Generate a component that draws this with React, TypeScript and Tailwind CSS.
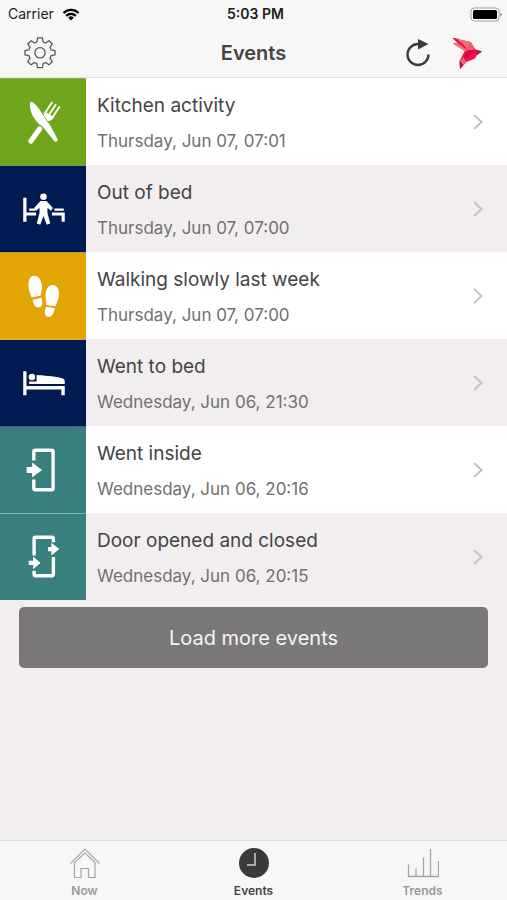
import { ReactNode, useState } from "react";

type EventItem = {
  title: string;
  time: string;
  tile: string;
  icon: ReactNode;
};

const KitchenIcon = () => (
  <svg viewBox="0 0 86 87" className="h-full w-full" fill="#fff" aria-hidden="true">
    <path d="M31 23c3 .5 6.500 4.500 10.500 11l5 8c1 1.500 2 2.300 3.300 4l8 15c.8 1.800-1.800 3.500-3.300 2L43 48.500c-1-1.200-2-1.600-3.500-2.500C33 40 29.300 32 29.700 24.500c0-.8.5-1.500 1.300-1.500z" />
    <path
      d="M39.500 50.500l-8.700 12.300"
      fill="none"
      stroke="#fff"
      strokeWidth="5.200"
      strokeLinecap="round"
    />
    <path
      d="M52 23.800l-6.500 10M55.800 26l-6.500 10M59.500 28.300l-6.500 10"
      fill="none"
      stroke="#fff"
      strokeWidth="1.900"
      strokeLinecap="round"
    />
    <path d="M44.600 32.500l9.500 6.200c-1.600 3-4.300 4.300-6.600 3.600L43.800 36.500c-.3-1.500 0-2.800.8-4z" />
  </svg>
);

const OutOfBedIcon = () => (
  <svg viewBox="0 0 86 87" className="h-full w-full" fill="#fff" aria-hidden="true">
    <path d="M23 32h3.300v15H36v3.200h-9.700V56.500H23zM29 43h6.500v2.300H29zM54.500 43H64v2.300h-9.500zM52 47h13v9.500h-3.200v-6.300H52z" />
    <circle cx="43.500" cy="31" r="3.300" />
    <path d="M40.500 35.300h6L53 42.500l-2 2.700-3.500-3v5l2.800 11-3.500 1.300-3.300-9-3.300 9-3.500-1.300 2.800-11v-5l-3.500 3-2-2.700z" />
  </svg>
);

const FootstepsIcon = () => (
  <svg viewBox="0 0 86 87" className="h-full w-full" fill="#fff" aria-hidden="true">
    <path d="M33.500 23c4.500-.5 7.500 3.500 8.300 9.500.6 4-.8 7-1 10.500l-9.500 2c-.8-3.500-2.800-6-3-11-.3-6 1.200-10.500 5.200-11z" />
    <path d="M32.500 47.300l8.800-2c1.500 4.500 1.500 9-2.300 9.700-4 .7-5.500-3-6.500-7.700z" />
    <path d="M54 32.500c4 .7 5.800 5 5 11-.6 4.300-2.500 7-3.200 10.300l-9.500-1.300c.3-3.500-1-6.500-.7-10.500.5-6 3.500-10.300 8.400-9.500z" />
    <path d="M46 54.500l9 1.300c-1 5-3 9.500-7 8.900-4-.7-3.500-6-2-10.200z" />
  </svg>
);

const BedIcon = () => (
  <svg viewBox="0 0 86 87" className="h-full w-full" fill="#fff" aria-hidden="true">
    <path d="M23 31.500h3.300V46.500H65V56h-3.500v-5.800H26.300V56H23z" />
    <circle cx="31.800" cy="37.500" r="3.300" />
    <path d="M36.500 35.500c6 .3 17 1.300 25 3 2.300.5 3.300 1.500 3.500 3v3H29V42h7.500z" />
  </svg>
);

const WentInsideIcon = () => (
  <svg viewBox="0 0 86 87" className="h-full w-full" fill="#fff" aria-hidden="true">
    <path
      d="M33.700 34V25c0-1 .5-1.500 1.500-1.500h16.500c1 0 1.500.500 1.500 1.500v37c0 1-.5 1.500-1.500 1.500H35.200c-1 0-1.500-.5-1.500-1.500v-9"
      fill="none"
      stroke="#fff"
      strokeWidth="3.400"
    />
    <path d="M26.500 40.500H32V36l10 7.500L32 51v-4.500h-5.500z" />
  </svg>
);

const DoorIcon = () => (
  <svg viewBox="0 0 86 87" className="h-full w-full" fill="#fff" aria-hidden="true">
    <path
      d="M34 42V25c0-1 .5-1.500 1.500-1.500h16.500c1 0 1.500.5 1.500 1.500v3.500M53.500 43.500V61c0 1-.5 1.500-1.500 1.500h-16.500c-1 0-1.500-.5-1.500-1.500v-3.500"
      fill="none"
      stroke="#fff"
      strokeWidth="3.400"
    />
    <path d="M48 33.300h3.500V29l8 6.500-8 6.500v-4.300H48zM28.500 47.300H33V43l7.500 6.500L33 56v-4.300h-4.500z" />
  </svg>
);

const events: EventItem[] = [
  {
    title: "Kitchen activity",
    time: "Thursday, Jun 07, 07:01",
    tile: "bg-[#6fa51b] border-[#8eb24f]",
    icon: <KitchenIcon />,
  },
  {
    title: "Out of bed",
    time: "Thursday, Jun 07, 07:00",
    tile: "bg-[#001b52] border-[#6f9f4c]",
    icon: <OutOfBedIcon />,
  },
  {
    title: "Walking slowly last week",
    time: "Thursday, Jun 07, 07:00",
    tile: "bg-[#e2a504] border-[#b89a4a]",
    icon: <FootstepsIcon />,
  },
  {
    title: "Went to bed",
    time: "Wednesday, Jun 06, 21:30",
    tile: "bg-[#001b52] border-[#d3b04c]",
    icon: <BedIcon />,
  },
  {
    title: "Went inside",
    time: "Wednesday, Jun 06, 20:16",
    tile: "bg-[#397f7e] border-[#3f5d86]",
    icon: <WentInsideIcon />,
  },
  {
    title: "Door opened and closed",
    time: "Wednesday, Jun 06, 20:15",
    tile: "bg-[#397f7e] border-[#7fb0af]",
    icon: <DoorIcon />,
  },
];

const StatusBar = () => (
  <div className="grid h-7 grid-cols-3 items-center pl-2 pr-1 text-sm leading-4 text-[#1c1c1c]">
    <div className="flex items-center gap-2">
      <span>Carrier</span>
      <svg viewBox="0 0 18 13" className="h-[13px] w-[18px]" aria-hidden="true">
        <path d="M9 12.500L6.200 9.700a4 4 0 0 1 5.600 0z" fill="#000" />
        <path
          d="M4.200 7.900a6.800 6.800 0 0 1 9.600 0M1.500 5a10.600 10.600 0 0 1 15 0"
          fill="none"
          stroke="#000"
          strokeWidth="2.200"
        />
      </svg>
    </div>
    <span className="text-center font-semibold">5:03 PM</span>
    <svg viewBox="0 0 33 15" className="h-[15px] w-[33px] justify-self-end" aria-hidden="true">
      <rect x="1" y="1" width="28" height="13" rx="3.500" fill="#fff" stroke="#9a9a9a" />
      <rect x="3" y="3" width="24" height="9" rx="1.500" fill="#000" />
      <path d="M30.500 5.500c1.500.6 1.500 3.400 0 4z" fill="#777" />
    </svg>
  </div>
);

const NavBar = () => (
  <div className="grid h-[50px] grid-cols-3 items-center border-b border-[#e6e5e6] px-6">
    <button type="button" aria-label="Settings" className="w-8">
      <svg viewBox="0 0 33 33" className="h-8 w-8" fill="none" stroke="#555" strokeWidth="1.300">
        <path
          strokeLinejoin="round"
          d="M14 1h5l.7 4 2.700 1.200 3.400-2.400 3.400 3.400-2.400 3.400L28 13.300l4 .7v4.500l-4 .7-1.200 2.800 2.400 3.300-3.400 3.400-3.400-2.400-2.700 1.200-.7 4h-5l-.7-4-2.700-1.200-3.300 2.400-3.500-3.400 2.400-3.300L5 19.200l-4-.7V14l4-.7 1.200-2.700-2.400-3.400 3.500-3.400 3.300 2.400L13.300 5z"
        />
        <circle cx="16.500" cy="16.300" r="5.300" />
      </svg>
    </button>
    <h1 className="text-center text-xl font-semibold text-[#454545]">Events</h1>
    <div className="flex items-center justify-end gap-5">
      <button type="button" aria-label="Refresh">
        <svg viewBox="0 0 26 30" className="h-[30px] w-[26px]">
          <path
            d="M23.500 16.500a10.500 10.500 0 1 1-10.500-10.500"
            fill="none"
            stroke="#3a3a3a"
            strokeWidth="2.300"
          />
          <path d="M13 1L23.500 6 13 11.500z" fill="#3a3a3a" />
        </svg>
      </button>
      <a href="#home" aria-label="Home">
        <svg viewBox="0 0 32 32" className="h-8 w-8">
          <path d="M1.500 1L19.500 5l5 7.500 6.500 2-5 3.500-2 3.500L15.500 25 9 32l-.5-8L14 13.500 2 6.500l5-.5z" fill="#e8164f" />
          <path d="M1.500 1l6 .8L15 8.500 7 6z" fill="#c2183f" />
          <path d="M5 1.800L19.500 5l-3 8.500-3-5z" fill="#f07074" />
          <path d="M2 6.500L7 6l9.500 7.500-2.500 1z" fill="#f07074" />
          <path d="M19.500 5l5 7.500-8 1z" fill="#ec5f68" />
          <path d="M16.500 13.500l8-1-7.500 8-5 .5z" fill="#e2003f" />
          <path d="M24.500 12.500l6.500 2-5 3.500z" fill="#b01c4c" />
          <path d="M8.500 24l4-3.500 3 4.500-3 3z" fill="#ee6670" />
          <path d="M8.500 24L9 32l3.500-4z" fill="#a91c46" />
        </svg>
      </a>
    </div>
  </div>
);

const EventRow = ({ event }: { event: EventItem }) => (
  <li className="odd:bg-white even:bg-[#f2eef0]">
    <a href="#event" className="flex h-[87px] items-center">
      <div className={`h-full w-[86px] shrink-0 border-t ${event.tile}`}>{event.icon}</div>
      <div className="min-w-0 flex-1 pl-[11px] pt-1">
        <h2 className="text-[19px] leading-7 text-[#444]">{event.title}</h2>
        <p className="mt-[7px] text-[17px] leading-7 text-[#707070]">{event.time}</p>
      </div>
      <svg viewBox="0 0 10 16" className="mr-6 h-4 w-[10px]" aria-hidden="true">
        <path d="M1 1l7.500 7L1 15" fill="none" stroke="#c4c2c4" strokeWidth="2" />
      </svg>
    </a>
  </li>
);

const NowIcon = () => (
  <svg viewBox="0 0 32 32" className="h-8 w-8" fill="none" stroke="#a6a6a6" strokeWidth="1.200">
    <path d="M1.500 16.500L16 2l14.500 14.500M5.500 15.500v15h6.500V21.500h7.500v9h6.500V15.500L16 6z" />
  </svg>
);

const ClockIcon = () => (
  <svg viewBox="0 0 32 32" className="h-8 w-8">
    <circle cx="16" cy="16" r="15" fill="#3a3a3a" />
    <path d="M17 6v12H9" fill="none" stroke="#d0d0d0" strokeWidth="1.500" />
  </svg>
);

const TrendsIcon = () => (
  <svg viewBox="0 0 32 32" className="h-8 w-8" fill="none" stroke="#a6a6a6" strokeWidth="1.300">
    <path d="M1.500 17.500V29.500h30V14M9 29.500V21.500M16.500 29.500V10.500M23.500 29.500V2" />
  </svg>
);

const tabs = [
  { name: "Now", icon: <NowIcon /> },
  { name: "Events", icon: <ClockIcon /> },
  { name: "Trends", icon: <TrendsIcon /> },
];

const App = () => {
  const [active, setActive] = useState("Events");

  return (
    <div className="flex min-h-screen flex-col bg-[#f2eef0] font-['Inter',sans-serif]">
      <header className="bg-[#f7f7f7]">
        <StatusBar />
        <NavBar />
      </header>
      <main className="flex-1">
        <ul>
          {events.map((event) => (
            <EventRow key={event.title} event={event} />
          ))}
        </ul>
        <div className="px-[19px] pt-[7px]">
          <button
            type="button"
            className="h-[61px] w-full rounded-[5px] bg-[#7a7778] text-xl text-[#f5f5f5]"
          >
            Load more events
          </button>
        </div>
      </main>
      <nav className="grid h-[60px] grid-cols-3 border-t border-[#dcd8da] bg-[#f7f7f7]">
        {tabs.map((tab) => (
          <button
            key={tab.name}
            type="button"
            onClick={() => setActive(tab.name)}
            className={`flex flex-col items-center pt-[6px] text-xs leading-4 font-semibold ${
              active === tab.name ? "text-[#454545]" : "text-[#999]"
            }`}
          >
            {tab.icon}
            <span className="mt-1">{tab.name}</span>
          </button>
        ))}
      </nav>
    </div>
  );
};

export default App;
